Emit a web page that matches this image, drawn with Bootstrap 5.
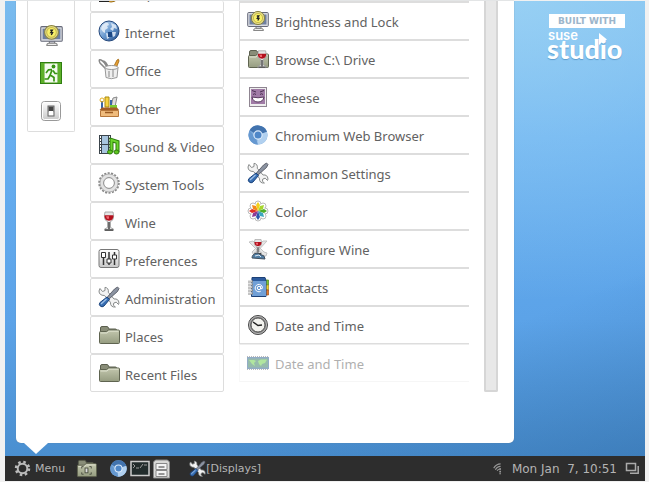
<!DOCTYPE html>
<html lang="en">
<head>
<meta charset="utf-8">
<meta name="viewport" content="width=device-width, initial-scale=1">
<title>Desktop menu</title>
<link href="https://cdn.jsdelivr.net/npm/bootstrap@5.3.0/dist/css/bootstrap.min.css" rel="stylesheet">
<style>
body{background:#f1f1f1;padding:1px 4px 1px 5px;font-family:"Noto Sans",sans-serif;font-size:13px;line-height:18px;color:#626262}
button{background:none;border:0;padding:0;color:inherit;text-align:left}
svg{flex:none;display:block}
.desktop{background:radial-gradient(ellipse 420px 300px at 80% 0,rgba(163,216,246,.7),rgba(140,200,245,0)),linear-gradient(158deg,rgba(0,0,0,0) 74%,rgba(40,95,150,.35)),linear-gradient(#7abbee,#66aef0 30%,#5ca3e8 70%,#4a8fd0);padding-left:11px}
.menu{background:#fff;border-radius:0 0 5px 5px;padding:0 16px 51px 11px;gap:15px;box-shadow:0 0 1px #678}
.menu::after{content:"";position:absolute;left:8px;top:100%;border:12px solid transparent;border-top:11px solid #fff;border-bottom:0}
.favs{width:48px;border:1px solid #ddd;border-top:0;padding:15px 0 1px;border-radius:0 0 2px 2px}
.favs button{height:38px}
.cats{width:134px}
.entry{height:38px;padding:0 7px;gap:5px;border:1px solid #ddd;width:100%;white-space:nowrap}
.entry span{padding-top:3px}
.cats .entry{border-radius:2px}
.cats .cut{height:11px;border-top:0;overflow:hidden;align-items:flex-end!important}
.cats .cut span{margin-bottom:3px;padding:0 0 5px}
.cats .cut svg{margin-bottom:8px}
.apps{border-top:1px solid #ddd}
.apps .entry{border-right:0}
.apps .entry span{padding-top:1px;padding-left:1px}
.apps .fading{border-color:#eee #fff #f6f6f6 #f8f8f8}
.fading>*{opacity:.5}
.track{width:14px;background:#e8e8e8;border:2px solid #d6d6d6;border-top:0;border-radius:0 0 2px 2px}
.side{width:131px;padding:13px 20px 0 33px;color:#fff}
.built{background:#fff;color:#9cb6cb;font:bold 9px/14px "DejaVu Sans",sans-serif;text-align:center;white-space:nowrap;margin-left:2px}
.suse{font:600 13px/11px Inter,sans-serif;margin-top:2px;padding-left:1px}
.studio{font:900 27px/16px Lato,sans-serif;text-shadow:0 1px 1px #5d9bcc}
.flag{right:37px;top:32px}
.taskbar{background:#2d2d2d;color:#b4b4b4;height:25px;font:12px/16px "DejaVu Sans",sans-serif;padding:0 5px 0 9px}
.label-sm{font-size:11px}
.taskbar .launch{gap:2px}
.ms-files{margin-left:11px}.ms-launch{margin-left:12px}.ms-win{margin-left:18px}
</style>
<script src="https://cdn.jsdelivr.net/npm/bootstrap@5.3.0/dist/js/bootstrap.bundle.min.js"></script>
</head>
<body class="d-flex flex-column min-vh-100">
<svg width="0" height="0" class="position-absolute" aria-hidden="true">
<defs>
<linearGradient id="gf" x2="0" y2="1"><stop stop-color="#c3c7ae"/><stop offset="1" stop-color="#959c80"/></linearGradient>
<linearGradient id="gb" x2="1" y2="1"><stop stop-color="#dbe9f7"/><stop offset=".5" stop-color="#6b9bd0"/><stop offset="1" stop-color="#204a87"/></linearGradient>
<linearGradient id="gw" x2="0" y2="1"><stop stop-color="#fff"/><stop offset="1" stop-color="#c8c8c8"/></linearGradient>
</defs>
<symbol id="folder" viewBox="0 0 22 22"><path d="M2.500 4q0-1.500 1.500-1.500h5q1 0 1.500 1.500l.5 1h6.500q1 0 1 1v11h-16z" fill="#898d78" stroke="#5b5f4e"/><path d="M1.500 8.500q0-1 1-1h6l2-1.500h10q1 0 1 1v11.500q0 1-1 1h-18q-1 0-1-1z" fill="url(#gf)" stroke="#5f6450"/><path d="M2.500 9h6.500l2-1.800h9.500" fill="none" stroke="#dfe2d0"/></symbol>
<symbol id="screen" viewBox="0 0 22 22"><path d="M9 16h5v3h-5z" fill="#c7c9d2" stroke="#777"/><path d="M6.500 20.500q0-2 2-2h6q2 0 2 2z" fill="#eee" stroke="#888"/><rect x=".7" y="2.500" width="20.600" height="14" rx="1" fill="#d9dbe0" stroke="#666979"/><rect x="2.500" y="4.500" width="17" height="10" fill="#6e7f9f"/><circle cx="11" cy="8" r="6.600" fill="#e3dc8a" stroke="#8a8342"/><circle cx="11" cy="8" r="4.600" fill="#f8f06a" stroke="#c9bb48"/><path d="M9.800 6h2L10.300 8.300h1.700l-1.200 2.200" fill="none" stroke="#222" stroke-width="1.300"/></symbol>
<symbol id="tools" viewBox="0 0 22 22"><path d="M2 2.500l2.500 3 2.500-1L7 1.300q4 .7 3.300 5L16 13q4.500-.7 5 4l-.5 1.500-2.300-2.300-2.400.8-.4 2.300 2 1.700q-5 .6-5-4.800L6.500 9.500Q1 9.500 1 5z" fill="#f3f3f3" stroke="#888b8b"/><path d="M19.500 1l1.500 1.500-1.500 3L11 13 9 11.500 16.500 3z" fill="#8b93a1" stroke="#4a4d58" stroke-width=".8"/><path d="M9 11l2.500 2.500L6 20q-2 1.700-3.800 0T2 16.500z" fill="#3970b4" stroke="#1b437c"/><path d="M8.500 13l-5.500 5" stroke="#a4c4ea" stroke-width="1.200"/></symbol>
<symbol id="chromium" viewBox="0 0 22 22"><circle cx="11" cy="11" r="9.600" fill="#7eaada"/><path d="M11 11L2.600 6.300A9.600 9.600 0 0 1 20.100 8z" fill="#4273ae"/><path d="M11 11l9-3.200A9.600 9.600 0 0 1 10 20.500z" fill="#b1d0ef"/><path d="M2.600 6.300L9 15l2 5.500A9.600 9.600 0 0 1 2.600 6.300" fill="#6598d0"/><circle cx="11" cy="11" r="4.700" fill="#dbeafa"/><circle cx="11" cy="11" r="3.500" fill="#4f87c8"/></symbol>
<symbol id="glass" viewBox="0 0 22 22"><path d="M7 2h8q2 8-2.500 9.500v6l3 1.500v1.500h-9V19l3-1.500v-6Q5 10 7 2" fill="#e5e5e5" stroke="#999" stroke-width=".8"/><path d="M6.500 5.200h9q.3 5-4.500 5.500-4.800-.5-4.500-5.500" fill="#b3101d"/><path d="M8 6.200h3v2.500H9z" fill="#ee6770"/><path d="M11 12v7M7 20h8" stroke="#444" stroke-width="1.500"/></symbol>
</svg>

<main class="desktop flex-grow-1 d-flex align-items-start justify-content-between">
<section class="menu position-relative flex-grow-1 d-flex" aria-label="Main menu">
<div class="favs align-self-start d-flex flex-column">
<button class="d-flex align-items-center justify-content-center" aria-label="Lock screen"><svg width="23" height="23"><use href="#screen"/></svg></button>
<button class="d-flex align-items-center justify-content-center" aria-label="Log out"><svg width="22" height="22" viewBox="0 0 22 22"><rect x=".5" y=".5" width="21" height="21" fill="#4a9c1c" stroke="#2f7e10"/><path d="M4.500 1.500h13v19h-13z" fill="#f4fbef"/><path d="M1 1h3v20H1zM18 1h3v20h-3z" fill="#5db029"/><circle cx="13.500" cy="4.500" r="1.900" fill="#379413"/><path d="M12 7.500L8.500 7.800 6 11M12 8l-1.800 5 3.800 2.500v4M10 13.500l-2 3.500H4.500M13 8.500l2 3h2.500" fill="none" stroke="#379413" stroke-width="1.700"/></svg></button>
<button class="d-flex align-items-center justify-content-center" aria-label="Shut down"><svg width="22" height="22" viewBox="0 0 22 22"><rect x="1.500" y="1.500" width="19" height="19" rx="3" fill="url(#gw)" stroke="#999"/><rect x="2.500" y="2.500" width="17" height="17" rx="2" fill="none" stroke="#fff"/><rect x="8" y="6" width="6" height="10" fill="#eee" stroke="#666"/><path d="M8.500 6.500h5v5h-5z" fill="#444"/><path d="M9 11h4v4H9z" fill="#fff"/></svg></button>
</div>
<nav class="cats flex-shrink-0" aria-label="Categories">
<button class="entry cut d-flex align-items-center"><svg width="22" height="22" viewBox="0 0 22 22"><circle cx="13" cy="12" r="9" fill="#eab643" stroke="#9a6b13"/><path d="M1 19q4-4 10 0v2H1z" fill="#222"/></svg><span>Graphics</span></button>
<button class="entry d-flex align-items-center"><svg width="22" height="22" viewBox="0 0 22 22"><circle cx="11" cy="11" r="10" fill="url(#gb)" stroke="#25497d"/><path d="M4 6q3-4 6-3l1 2-2 1 1 2-3 2v3l-2-1-2-3zM13 3l5 2 1 4-3-1-1 3-3-2 2-2zM8 13l4 1-1 4-2 1zM14 12l4 0-1 4-2 1z" fill="#edf4fb" opacity=".8"/><path d="M10 12h4v5h-4z" fill="#1d4985"/></svg><span>Internet</span></button>
<button class="entry d-flex align-items-center"><svg width="22" height="22" viewBox="0 0 22 22"><path d="M14 12L19 2q2-2 2 1L17 13z" fill="#e6a035" stroke="#9c6412" stroke-width=".8"/><path d="M9 12L2 5q-2-4 1-3t7 9M5 3q3 0 6 8" fill="none" stroke="#888" stroke-width="1.500"/><path d="M7 9.500l1 10q5 2.500 11 0l1-10" fill="#eee" stroke="#999"/><ellipse cx="13.500" cy="9.500" rx="6.500" ry="2" fill="#f9f9f9" stroke="#999"/><path d="M11 13v6M15 12v7" stroke="#bbb" stroke-width="2"/></svg><span>Office</span></button>
<button class="entry d-flex align-items-center"><svg width="22" height="22" viewBox="0 0 22 22"><path d="M7 1h4v10H7z" fill="#f7d340" stroke="#a98811"/><path d="M15 2l4-1-2 10h-4z" fill="#ddd" stroke="#888"/><path d="M4 5v8M13 4v8" stroke="#3b66a5" stroke-width="2"/><circle cx="4" cy="4" r="2" fill="none" stroke="#e3af22"/><path d="M12 9h7v4h-7z" fill="#7bcb32"/><path d="M1.500 14L4 11.500h15l2 2.500z" fill="#a35d24"/><path d="M2.500 14.500h18v6h-18z" fill="#efbb7c" stroke="#b5763a"/><path d="M7 16.500h8" stroke="#9a5b22" stroke-width="1.500"/></svg><span>Other</span></button>
<button class="entry d-flex align-items-center"><svg width="22" height="22" viewBox="0 0 22 22"><path d="M1 1h12v19H1z" fill="#3b444b"/><path d="M4 2h6v8H4zM4 11h6v8H4z" fill="#a8c5df"/><path d="M2.500 2v18M11.500 2v18" stroke="#fff" stroke-dasharray="2 1"/><path d="M13.500 18V6l6 2v10" fill="none" stroke="#2c7a0c" stroke-width="4"/><path d="M13.500 18V6l6 2v10" fill="none" stroke="#6cd52e" stroke-width="2"/><ellipse cx="12" cy="18" rx="2.500" ry="2" fill="#5ec51f" stroke="#2c7a0c"/><ellipse cx="18.500" cy="18" rx="2.500" ry="2" fill="#5ec51f" stroke="#2c7a0c"/></svg><span>Sound &amp; Video</span></button>
<button class="entry d-flex align-items-center"><svg width="22" height="22" viewBox="0 0 22 22"><circle cx="11" cy="11" r="9.500" fill="none" stroke="#888" stroke-width="2.500" stroke-dasharray="2 1.320"/><circle cx="11" cy="11" r="7.300" fill="#fff" stroke="#e2e2e2" stroke-width="3.500"/><circle cx="11" cy="11" r="9" fill="none" stroke="#aaa" stroke-width=".8"/><circle cx="11" cy="11" r="5.400" fill="#fff" stroke="#888"/></svg><span>System Tools</span></button>
<button class="entry d-flex align-items-center"><svg width="22" height="22"><use href="#glass"/></svg><span>Wine</span></button>
<button class="entry d-flex align-items-center"><svg width="22" height="22" viewBox="0 0 22 22"><rect x="1" y="1.500" width="20" height="18" rx="2" fill="url(#gw)" stroke="#777"/><path d="M5.500 4v13M11 4v13M16.500 4v13" stroke="#333" stroke-width="1.500"/><path d="M3.500 4.500h4v5h-4zM9 11h4v4H9zM14.500 7h4v4h-4z" fill="#fff" stroke="#333"/></svg><span>Preferences</span></button>
<button class="entry d-flex align-items-center"><svg width="22" height="22"><use href="#tools"/></svg><span>Administration</span></button>
<button class="entry d-flex align-items-center"><svg width="22" height="22"><use href="#folder"/></svg><span>Places</span></button>
<button class="entry d-flex align-items-center"><svg width="22" height="22"><use href="#folder"/></svg><span>Recent Files</span></button>
</nav>
<div class="apps flex-grow-1">
<button class="entry d-flex align-items-center"><svg width="22" height="22"><use href="#screen"/></svg><span>Brightness and Lock</span></button>
<button class="entry d-flex align-items-center"><svg width="22" height="22" viewBox="0 0 22 22"><use href="#folder"/><use href="#glass" x="5" width="20" height="22"/></svg><span>Browse C:\ Drive</span></button>
<button class="entry d-flex align-items-center"><svg width="22" height="22" viewBox="0 0 22 22"><rect x="2.500" y="1.500" width="17" height="19" fill="#eee" stroke="#8f8591"/><path d="M4 3h14v15H4z" fill="#a07ba6"/><path d="M5 4.500l4 1.500M17 4.500L13 6M6 8.500q1.500-1.500 3 0M13 8.500q1.500-1.500 3 0" stroke="#4a3052" fill="none"/><path d="M5 11q6 1.500 12 0-1 5-6 5t-6-5" fill="#fff" stroke="#5a3d60"/></svg><span>Cheese</span></button>
<button class="entry d-flex align-items-center"><svg width="22" height="22"><use href="#chromium"/></svg><span>Chromium Web Browser</span></button>
<button class="entry d-flex align-items-center"><svg width="22" height="22"><use href="#tools"/></svg><span>Cinnamon Settings</span></button>
<button class="entry d-flex align-items-center"><svg width="22" height="22" viewBox="0 0 22 22"><g fill="#fff" stroke="#bbb"><circle cx="11" cy="4" r="3"/><circle cx="16" cy="6" r="3"/><circle cx="18" cy="11" r="3"/><circle cx="16" cy="16" r="3"/><circle cx="11" cy="18" r="3"/><circle cx="6" cy="16" r="3"/><circle cx="4" cy="11" r="3"/><circle cx="6" cy="6" r="3"/></g><circle cx="11" cy="11" r="7" fill="#fff"/><path d="M11 11L9 5l2-3 2 3z" fill="#f1d21a"/><path d="M11 11l2-5 4-1-1 4z" fill="#a6d52d"/><path d="M11 11l6-2 3 2-3 2z" fill="#4eae29"/><path d="M11 11l5 2 1 4-4-1z" fill="#3ba6bd"/><path d="M11 11l2 6-2 3-2-3z" fill="#2d57ac"/><path d="M11 11l-2 5-4 1 1-4z" fill="#8c3b96"/><path d="M11 11l-6 2-3-2 3-2z" fill="#e12f24"/><path d="M11 11L6 9 5 5l4 1z" fill="#f28a19"/></svg><span>Color</span></button>
<button class="entry d-flex align-items-center"><svg width="22" height="22" viewBox="0 0 22 22"><path d="M2 4l4-1 11 11 3 1-1 3-4-1zM20 3l-4 0L5 14l2 3z" fill="#e6e6e6" stroke="#c4c4c4"/><use href="#glass" x="2" width="18" height="17"/><path d="M5 20q0-4 5-5l7 3 1 3z" fill="#507da3" stroke="#43505e"/><path d="M8 18l4-1 2 2" stroke="#dce8f2" fill="none"/></svg><span>Configure Wine</span></button>
<button class="entry d-flex align-items-center"><svg width="22" height="22" viewBox="0 0 22 22"><path d="M18.500 4h3v5h-3z" fill="#7fc531" stroke="#4d8a1a" stroke-width=".7"/><path d="M18.500 9h3v5h-3z" fill="#f0d32d" stroke="#a58f17" stroke-width=".7"/><path d="M18.500 14h3v5h-3z" fill="#e27a2b" stroke="#a04c12" stroke-width=".7"/><path d="M5 1.500h13l1 3v16H4.500z" fill="#2c5b9e" stroke="#1c4076"/><path d="M5 5h14v15H5z" fill="#709fd6"/><circle cx="12" cy="12" r="1.700" fill="none" stroke="#fff"/><path d="M13.700 10v2.500q1.800 1 1.800-1a3.700 3.700 0 1 0-1.800 3.800" fill="none" stroke="#fff"/><path d="M1 5.500h5M1 8.500h5M1 11.500h5M1 14.500h5M1 17.500h5" stroke="#888" stroke-width="2"/><path d="M1 5h4M1 8h4M1 11h4M1 14h4M1 17h4" stroke="#fff"/></svg><span>Contacts</span></button>
<button class="entry d-flex align-items-center"><svg width="22" height="22" viewBox="0 0 22 22"><circle cx="11" cy="11" r="9.500" fill="#777" stroke="#484848"/><circle cx="11" cy="11" r="8.500" fill="none" stroke="#bbb"/><circle cx="11" cy="11" r="7" fill="#f2f2ee" stroke="#555"/><path d="M6 8l5 3.500 4-.5" fill="none" stroke="#222" stroke-width="1.500"/></svg><span>Date and Time</span></button>
<button class="entry fading d-flex align-items-center"><svg width="22" height="22" viewBox="0 0 22 22"><path d="M0 5h22v12H0z" fill="#285b8f"/><path d="M1 6.500h20v9H1z" fill="#2f7a5a"/><path d="M2 8h5l2 1-2 2 1 3-3-2zM11 9l3-1.500h6L18 11l-3 1-1 2-2-2z" fill="#65cf42"/><path d="M0 4.500h22M0 17.500h22" stroke="#777" stroke-dasharray="1 1"/></svg><span>Date and Time</span></button>
</div>
<div class="track flex-shrink-0"></div>
</section>
<aside class="side flex-shrink-0 position-relative">
<div class="built">BUILT WITH</div>
<div class="suse">suse</div>
<div class="studio">studio</div>
<svg class="flag position-absolute" width="10" height="12" viewBox="0 0 10 12" aria-hidden="true"><path d="M1 0l8 6.500-5 2.500-3 3z" fill="#fff"/></svg>
</aside>
</main>

<footer class="taskbar d-flex align-items-center">
<button class="label-sm d-flex align-items-center gap-1"><svg width="17" height="17" viewBox="0 0 17 17"><circle cx="8.500" cy="8.500" r="6.500" fill="none" stroke="#bbb" stroke-width="2.500" stroke-dasharray="2.500 2.605"/><circle cx="8.500" cy="8.500" r="4.800" fill="none" stroke="#bbb" stroke-width="2"/></svg><span>Menu</span></button>
<button class="ms-files" aria-label="Home folder"><svg width="21" height="21" viewBox="0 0 22 22"><use href="#folder"/><path d="M6 11V9h2M14 9h2v2M6 15v2h2M14 17h2v-2" fill="none" stroke="#4f5344"/><rect x="9.500" y="10.500" width="3" height="5" fill="#ddd" stroke="#4f5344"/></svg></button>
<div class="ms-launch launch d-flex align-items-center">
<button aria-label="Chromium"><svg width="19" height="19"><use href="#chromium"/></svg></button>
<button aria-label="Terminal"><svg width="20" height="17" viewBox="0 0 20 17"><rect x="1" y="1.500" width="18" height="14" fill="#222c2c" stroke="#ccc" stroke-width="1.500"/><path d="M3 4l2 2-2 2M6 8h3M10 8l3-4M14 5h3" stroke="#999" fill="none"/></svg></button>
<button aria-label="Files"><svg width="19" height="20" viewBox="0 0 18 20"><path d="M3 1h12l2 2v16H1V3z" fill="#d9d9d7" stroke="#888"/><path d="M3.500 4.500h11v6h-11zM3.500 11.500h11v6h-11z" fill="#f3f3f3" stroke="#888"/><path d="M6 8h6M6 15h6" stroke="#777" stroke-width="1.500"/></svg></button>
</div>
<button class="ms-win label-sm d-flex align-items-center"><svg width="17" height="17"><use href="#tools"/></svg><span>[Displays]</span></button>
<div class="ms-auto d-flex align-items-center">
<svg class="me-2" width="12" height="12" viewBox="0 0 12 14"><path d="M1 6q3-5 8-5M3 8q2-4 6-4M5 9q1-2 4-2" fill="none" stroke="#999" stroke-width="1.300"/><path d="M8.500 6v7" stroke="#999" stroke-width="2" stroke-dasharray="2 1"/></svg>
<time>Mon Jan&nbsp; 7, 10:51</time>
<button class="ms-2" aria-label="Windows"><svg width="15" height="13" viewBox="0 0 15 13"><path d="M1.500 1.500h9v7h-9z" fill="none" stroke="#aaa" stroke-width="1.500"/><path d="M13.200 4v7.200H5" fill="none" stroke="#aaa" stroke-width="1.500"/></svg></button>
</div>
</footer>
</body>
</html>
